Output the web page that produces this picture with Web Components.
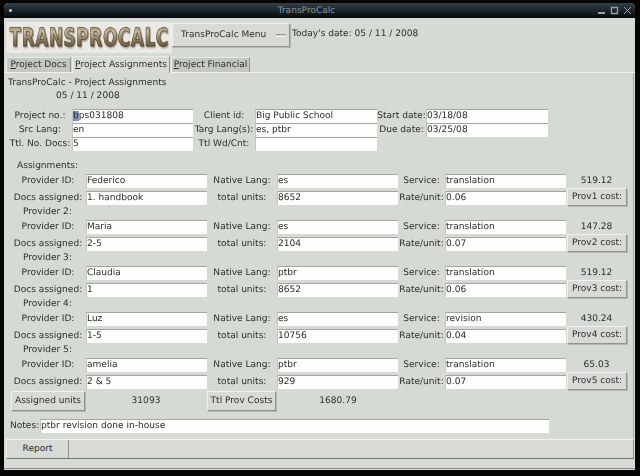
<!DOCTYPE html>
<html>
<head>
<meta charset="utf-8">
<title>TransProCalc</title>
<style>
  html, body { margin: 0; height: 476px; overflow: hidden; background: #050505; }
  body { font: 9.05px "DejaVu Sans", sans-serif; color: #2c2f2c; text-rendering: geometricPrecision; }
</style>
</head>
<body>
<tp-window>
  <tp-titlebar>TransProCalc</tp-titlebar>
  <tp-header></tp-header>
  <tp-tabs></tp-tabs>
  <tp-panel>
    <tp-project></tp-project>
    <tp-provider heading="Assignments:" first id-value="Federico" lang="es" service="translation" docs="1. handbook" units="8652" rate="0.06" total="519.12" n="1"></tp-provider>
    <tp-provider heading="Provider 2:" id-value="Maria" lang="es" service="translation" docs="2-5" units="2104" rate="0.07" total="147.28" n="2"></tp-provider>
    <tp-provider heading="Provider 3:" id-value="Claudia" lang="ptbr" service="translation" docs="1" units="8652" rate="0.06" total="519.12" n="3"></tp-provider>
    <tp-provider heading="Provider 4:" id-value="Luz" lang="es" service="revision" docs="1-5" units="10756" rate="0.04" total="430.24" n="4"></tp-provider>
    <tp-provider heading="Provider 5:" id-value="amelia" lang="ptbr" service="translation" docs="2 &amp; 5" units="929" rate="0.07" total="65.03" n="5"></tp-provider>
    <tp-totals></tp-totals>
    <tp-notes></tp-notes>
  </tp-panel>
  <tp-toolbar></tp-toolbar>
</tp-window>

<script>
// small helper, every element just sets its shadow html once
class Base extends HTMLElement {
  constructor() {
    super();
    this.attachShadow({ mode: "open" });
  }
  connectedCallback() {
    this.shadowRoot.innerHTML = this.render();
  }
}

class TpField extends Base {
  render() {
    return `<style>
      :host { display: block; height: 14px; box-sizing: border-box; background: #fdfdfb;
        border-top: 1px solid #a3a6a1; border-left: 1px solid #c2c5c0; padding-left: 0;
        line-height: 13px; white-space: nowrap; overflow: hidden; }
      ::slotted(b) { font-weight: normal; background: #7f8fb4; color: #26304a; }
    </style><slot></slot>`;
  }
}

class TpButton extends Base {
  render() {
    return `<style>
      :host { display: flex; align-items: center; justify-content: center; box-sizing: border-box;
        background: #d8dbd5; border: 1px solid; border-color: #f1f2ef #8f928d #8f928d #f1f2ef;
        box-shadow: 1px 1px 0 #b4b7b2; white-space: nowrap; }
    </style><slot></slot>`;
  }
}

class TpWindow extends Base {
  render() {
    return `<style>
      :host { display: flex; flex-direction: column; width: 631px; height: 467px; margin: 3px 0 0 4px;
        background: #d6dad4; border-radius: 5px 5px 0 0; overflow: hidden; filter: blur(.3px); }
      .edge { height: 8px; border-bottom: 1px solid #8b8e89; margin-top: 1px; }
    </style><slot></slot><div class="edge"></div>`;
  }
}

class TpTitlebar extends Base {
  render() {
    return `<style>
      :host { display: flex; align-items: center; height: 15px; padding: 0 3px 0 5px; flex: none;
        background: linear-gradient(#2f3f49, #1a2228 55%, #05080a); color: #8a9499; }
      .dot { width: 3px; height: 3px; background: #c5d0d6; border-radius: 50%; }
      .name { flex: 1; text-align: center; margin-left: 4px; }
      .btns { display: flex; gap: 4px; align-items: center; }
      svg { display: block; }
    </style>
    <span class="dot"></span>
    <span class="name"><slot></slot></span>
    <span class="btns">
      <svg width="9" height="9" viewBox="0 0 9 9"><path d="M1 7h7" stroke="#8fa1ac" stroke-width="2"/></svg>
      <svg width="9" height="9" viewBox="0 0 9 9"><path d="M1.500 1.500h6v6h-6z" fill="none" stroke="#8fa1ac" stroke-width="1.300"/></svg>
      <svg width="9" height="9" viewBox="0 0 9 9"><path d="M1 1l7 7M8 1l-7 7" stroke="#8fa1ac" stroke-width="1"/></svg>
    </span>`;
  }
}

class TpHeader extends Base {
  render() {
    return `<style>
      :host { display: flex; align-items: flex-start; height: 38px; padding: 4px 0 0 2px; box-sizing: border-box; flex: none; }
      .logo { width: 166px; height: 31px; background: #ebe9e3; display: flex; align-items: center; justify-content: center; }
      .logo span { font: bold 25px "DejaVu Sans Condensed", "DejaVu Sans", sans-serif; letter-spacing: .8px;
        transform: scaleX(.75); white-space: nowrap;
        background: linear-gradient(#7d6f52, #c9bb9c 30%, #8d7a58 58%, #54462f);
        -webkit-background-clip: text; background-clip: text; color: transparent;
        -webkit-text-stroke: .5px #37322a; filter: drop-shadow(1px 1px 1px #7b7365); }
      tp-button { width: 118px; height: 24px; margin-top: 1px; justify-content: space-between; padding: 0 3px 0 8px; }
      .mark { width: 10px; border-top: 1px solid #8f928d; border-bottom: 1px solid #eef0ec; height: 1px; }
      .today { margin: 7px 0 0 2px; white-space: nowrap; }
    </style>
    <div class="logo"><span>TRANSPROCALC</span></div>
    <tp-button>TransProCalc Menu<span class="mark"></span></tp-button>
    <span class="today">Today's date: 05 / 11 / 2008</span>`;
  }
}

class TpTabs extends Base {
  render() {
    return `<style>
      :host { display: flex; align-items: flex-end; height: 17px; padding-left: 2px; gap: 1px; flex: none;
        border-bottom: 1px solid #f0f1ee; margin-top: -1px; }
      span { height: 15px; line-height: 15px; box-sizing: border-box; background: #c3c8c2; white-space: nowrap;
        border-left: 1px solid #eceee9; border-right: 1px solid #8f928d; border-top: 1px solid #e6e8e3; text-align: center; }
      span.on { height: 17px; background: #d9dcd6; line-height: 16px; margin-bottom: -1px; }
      u { text-decoration: underline; }
    </style>
    <span style="width:65px"><u>P</u>roject Docs</span>
    <span class="on" style="width:98px"><u>P</u>roject Assignments</span>
    <span style="width:79px"><u>P</u>roject Financial</span>`;
  }
}

class TpPanel extends Base {
  render() {
    return `<style>
      :host { display: flex; flex-direction: column; flex: none; height: 365px; box-sizing: border-box;
        margin: 0 1px; padding: 4px 0 0 0; border-right: 1px solid #a5a8a3; }
      .title { padding-left: 3px; line-height: 13px; }
      .date { padding-left: 51px; line-height: 13px; margin-bottom: 6px; }
    </style>
    <div class="title">TransProCalc - Project Assignments</div>
    <div class="date">05 / 11 / 2008</div>
    <slot></slot>`;
  }
}

class TpProject extends Base {
  render() {
    return `<style>
      :host { display: grid; grid-template-columns: 64px 121px 62px 122px 49px 122px; grid-auto-rows: 14px;
        padding-left: 3px; margin-bottom: 8px; line-height: 14px; white-space: nowrap; }
      span { text-align: center; }
    </style>
    <span>Project no.:</span><tp-field><b>b</b>ps031808</tp-field>
    <span>Client id:</span><tp-field>Big Public School</tp-field>
    <span>Start date:</span><tp-field>03/18/08</tp-field>
    <span>Src Lang:</span><tp-field>en</tp-field>
    <span>Targ Lang(s):</span><tp-field>es, ptbr</tp-field>
    <span>Due date:</span><tp-field>03/25/08</tp-field>
    <span>Ttl. No. Docs:</span><tp-field>5</tp-field>
    <span>Ttl Wd/Cnt:</span><tp-field></tp-field>`;
  }
}

class TpProvider extends Base {
  render() {
    const a = (k) => this.getAttribute(k);
    const first = this.hasAttribute("first");
    return `<style>
      :host { display: block; padding-left: 5px; line-height: 14px; white-space: nowrap; }
      .head { height: 15px; line-height: 15px; padding-left: ${first ? 7 : 13}px; }
      .rows { display: grid; grid-template-columns: 76px 121px 70px 121px 47px 121px 61px;
        grid-template-rows: 14px 14px; row-gap: 3px; }
      span { text-align: center; }
      tp-button { height: 18px; margin: -3px 0 -1px 1px; }
    </style>
    <div class="head">${a("heading")}</div>
    <div class="rows">
      <span>Provider ID:</span><tp-field>${a("id-value")}</tp-field>
      <span>Native Lang:</span><tp-field>${a("lang")}</tp-field>
      <span>Service:</span><tp-field>${a("service")}</tp-field>
      <span>${a("total")}</span>
      <span>Docs assigned:</span><tp-field>${a("docs").replace("&", "&amp;")}</tp-field>
      <span>total units:</span><tp-field>${a("units")}</tp-field>
      <span>Rate/unit:</span><tp-field>${a("rate")}</tp-field>
      <tp-button>Prov${a("n")} cost:</tp-button>
    </div>`;
  }
}

class TpTotals extends Base {
  render() {
    return `<style>
      :host { display: flex; align-items: center; height: 20px; margin-top: 2px; padding-left: 6px; white-space: nowrap; }
      tp-button { height: 20px; }
      span { text-align: center; }
    </style>
    <tp-button style="width:74px">Assigned units</tp-button>
    <span style="width:122px">31093</span>
    <tp-button style="width:69px">Ttl Prov Costs</tp-button>
    <span style="width:42px;margin-left:41px">1680.79</span>`;
  }
}

class TpNotes extends Base {
  render() {
    return `<style>
      :host { display: flex; align-items: center; margin-top: 8px; padding-left: 5px; white-space: nowrap; }
      span { width: 30px; }
      tp-field { width: 509px; }
    </style>
    <span>Notes:</span><tp-field>ptbr revision done in-house</tp-field>`;
  }
}

class TpToolbar extends Base {
  render() {
    return `<style>
      :host { display: flex; flex: none; height: 20px; margin: 1px 1px 0 2px; background: #d8dbd5;
        border: 1px solid; border-color: #f1f2ef #8f928d #6f726d #f1f2ef; box-sizing: border-box; }
      tp-button { width: 62px; height: 18px; border-width: 0 1px 0 0; box-shadow: none; }
    </style><tp-button>Report</tp-button>`;
  }
}

customElements.define("tp-field", TpField);
customElements.define("tp-button", TpButton);
customElements.define("tp-window", TpWindow);
customElements.define("tp-titlebar", TpTitlebar);
customElements.define("tp-header", TpHeader);
customElements.define("tp-tabs", TpTabs);
customElements.define("tp-panel", TpPanel);
customElements.define("tp-project", TpProject);
customElements.define("tp-provider", TpProvider);
customElements.define("tp-totals", TpTotals);
customElements.define("tp-notes", TpNotes);
customElements.define("tp-toolbar", TpToolbar);
</script>
</body>
</html>
